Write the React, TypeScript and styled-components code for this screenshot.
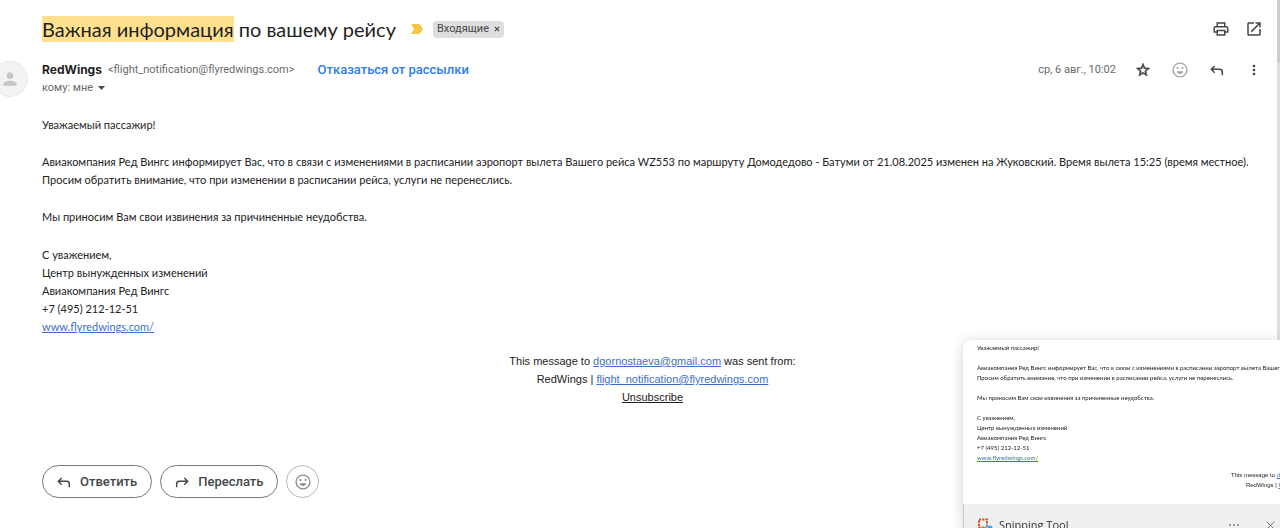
import React from "react";
import styled, { createGlobalStyle } from "styled-components";

const GlobalStyle = createGlobalStyle`
  *, *::before, *::after { box-sizing: border-box; }
  body { margin: 0; background: #fff; color: #222; font-family: Roboto, "Liberation Sans", sans-serif; }
  button { font: inherit; color: inherit; padding: 0; border: 0; background: none; cursor: pointer; }
  p, h1 { margin: 0; }
`;

const Page = styled.div`
  display: flex;
  min-height: 100vh;
  overflow: hidden;
`;

const Main = styled.main`
  flex: 1;
  min-width: 0;
  padding: 13px 7px 30px 0;
`;

const ScrollTrack = styled.div`
  width: 3px;
  background: #dfdfdf;
`;

const ScrollThumb = styled.div`
  height: 63px;
  background: #cdcdcd;
`;

const SubjectRow = styled.header`
  display: flex;
  align-items: center;
  height: 32px;
  padding-left: 42px;
`;

const Subject = styled.h1`
  font: 400 20px/26px Lato, "Open Sans", sans-serif;
  color: #1f1f1f;
  white-space: nowrap;
`;

const Highlight = styled.mark`
  padding: 1px 0;
  background: #fee08f;
  color: inherit;
`;

const Marker = styled.svg`
  width: 12px;
  height: 10px;
  margin: 0 10px 0 15px;
  fill: #f5c542;
`;

const Label = styled.span`
  display: flex;
  align-items: center;
  gap: 5px;
  height: 17px;
  padding: 0 4px;
  border-radius: 4px;
  background: #dddedd;
  color: #444746;
  font-size: 11px;
  line-height: 16px;
`;

const LabelClose = styled.button`
  display: flex;
`;

const Actions = styled.div<{ $gap: number }>`
  display: flex;
  align-items: center;
  gap: ${(p) => p.$gap}px;
  margin-left: auto;
`;

const IconButton = styled.button<{ $muted?: boolean }>`
  display: flex;
  align-items: center;
  justify-content: center;
  width: 32px;
  height: 18px;
  color: ${(p) => (p.$muted ? "#a3a5a4" : "#444746")};
`;

const SenderRow = styled.section`
  display: flex;
  align-items: flex-start;
  margin-top: 16px;
`;

const Avatar = styled.div`
  display: flex;
  align-items: center;
  justify-content: center;
  flex: none;
  width: 36px;
  height: 36px;
  margin: 0 14px 0 -8px;
  border: 1px solid #e9e9e9;
  border-radius: 50%;
  background: #f3f3f3;
  color: #c6c6c6;
`;

const SenderLine = styled.div`
  display: flex;
  align-items: center;
  height: 18px;
  font-size: 11px;
  line-height: 18px;
  color: #6a6a6a;
  white-space: nowrap;
`;

const SenderName = styled.span`
  margin-right: 6px;
  font: 700 12px/18px Inter, sans-serif;
  color: #1f1f1f;
`;

const UnsubscribeLink = styled.a`
  margin-left: 23px;
  font-size: 13px;
  font-weight: 500;
  color: #2b7de9;
  text-decoration: none;
`;

const RecipientButton = styled.button`
  display: flex;
  align-items: center;
  gap: 5px;
`;

const DateText = styled.time`
  margin-right: 6px;
  font-size: 11px;
  line-height: 18px;
  color: #6a6a6a;
`;

const Letter = styled.article`
  display: flex;
  flex-direction: column;
  gap: 19px;
  margin: 19px 7px 0 42px;
  font: 400 11px/18px Lato, "Open Sans", sans-serif;
  color: #222;

  p:last-child {
    padding-top: 1px;
  }
`;

const MailLink = styled.a<{ $dark?: boolean }>`
  color: ${(p) => (p.$dark ? "#222" : "#3b6fc9")};
`;

const Footer = styled.footer`
  margin: 16px 7px 0 42px;
  font: 400 11px/18px "Liberation Sans", Arial, sans-serif;
  text-align: center;
`;

const ReplyRow = styled.div`
  display: flex;
  gap: 8px;
  margin: 59px 0 0 42px;
`;

const PillButton = styled.button`
  display: flex;
  align-items: center;
  gap: 8px;
  height: 33px;
  padding: 0 14px 0 13px;
  border: 1px solid #747775;
  border-radius: 17px;
  font-size: 13px;
  font-weight: 500;
  color: #444746;
`;

const RoundButton = styled.button`
  display: flex;
  align-items: center;
  justify-content: center;
  width: 33px;
  height: 33px;
  border: 1px solid #b4b6b5;
  border-radius: 50%;
  color: #8a8c8b;
`;

const Toast = styled.aside`
  position: fixed;
  right: 0;
  bottom: 0;
  width: 317px;
  overflow: hidden;
  border-radius: 8px 0 0 0;
  background: #fff;
  box-shadow: 0 2px 14px rgba(0, 0, 0, 0.18);
`;

const Capture = styled.div`
  display: flex;
  flex-direction: column;
  gap: 10px;
  padding: 3px 0 14px 14px;
  font: 400 6px/10px Lato, "Open Sans", sans-serif;
  white-space: nowrap;
`;

const CaptureFooter = styled.div`
  width: max-content;
  margin: -3px 0 0 254px;
  font-family: "Liberation Sans", Arial, sans-serif;
  text-align: center;
`;

const ToastBar = styled.div`
  display: flex;
  align-items: flex-start;
  height: 24px;
  padding: 14px 0 0 14px;
  background: #efefef;
  border-left: 1px solid #c9c9c9;
  color: #333;
  font: 400 11px/14px "Open Sans", sans-serif;
`;

const ToastTitle = styled.span`
  margin: 0 auto 0 6px;
`;

const ToastButton = styled.button`
  display: flex;
  align-items: center;
  justify-content: center;
  width: 20px;
  height: 14px;
  margin-left: 16px;
  color: #777;
`;

const Icon = ({ d, size = 18, stroke = 0 }: { d: string; size?: number; stroke?: number }) => (
  <svg
    width={size}
    height={size}
    viewBox="0 0 24 24"
    fill="currentColor"
    stroke="currentColor"
    strokeWidth={stroke}
    aria-hidden="true"
  >
    <path d={d} />
  </svg>
);

const PRINT =
  "M19 8h-1V3H6v5H5c-1.66 0-3 1.34-3 3v6h4v4h12v-4h4v-6c0-1.66-1.34-3-3-3zM8 5h8v3H8V5zm8 14H8v-4h8v4zm2-4v-2H6v2H4v-4c0-.55.45-1 1-1h14c.55 0 1 .45 1 1v4h-2z";
const OPEN =
  "M19 19H5V5h7V3H5c-1.11 0-2 .9-2 2v14c0 1.1.89 2 2 2h14c1.1 0 2-.9 2-2v-7h-2v7zM14 3v2h3.59l-9.83 9.83 1.41 1.41L19 6.41V10h2V3h-7z";
const STAR =
  "M22 9.24l-7.19-.62L12 2 9.19 8.63 2 9.24l5.46 4.73L5.82 21 12 17.27 18.18 21l-1.63-7.03L22 9.24zM12 15.4l-3.76 2.27 1-4.28-3.32-2.88 4.38-.38L12 6.1l1.71 4.04 4.38.38-3.32 2.88 1 4.28L12 15.4z";
const DOTS =
  "M12 8c1.1 0 2-.9 2-2s-.9-2-2-2-2 .9-2 2 .9 2 2 2zm0 2c-1.1 0-2 .9-2 2s.9 2 2 2 2-.9 2-2-.9-2-2-2zm0 6c-1.1 0-2 .9-2 2s.9 2 2 2 2-.9 2-2-.9-2-2-2z";
const PERSON =
  "M12 12c2.21 0 4-1.79 4-4s-1.79-4-4-4-4 1.79-4 4 1.79 4 4 4zm0 2c-2.67 0-8 1.34-8 4v2h16v-2c0-2.66-5.33-4-8-4z";

const Smile = () => (
  <svg width="18" height="18" viewBox="0 0 24 24" fill="none" stroke="currentColor" strokeWidth="1.8" aria-hidden="true">
    <circle cx="12" cy="12" r="9.2" />
    <circle cx="8.6" cy="9.4" r="1.4" fill="currentColor" stroke="none" />
    <circle cx="15.4" cy="9.4" r="1.4" fill="currentColor" stroke="none" />
    <path d="M7.500 13.800h9c-.6 2.200-2.400 3.500-4.500 3.500s-3.900-1.300-4.500-3.500z" fill="currentColor" stroke="none" />
  </svg>
);

const Arrow = ({ forward }: { forward?: boolean }) => (
  <svg width="16" height="16" viewBox="0 0 24 24" fill="none" stroke="currentColor" strokeWidth="2.200" aria-hidden="true">
    <path
      d={
        forward
          ? "M15.500 6l5 5-5 5M20 11H8a4 4 0 0 0-4 4v5"
          : "M8.500 6l-5 5 5 5M4 11h12a4 4 0 0 1 4 4v5"
      }
    />
  </svg>
);

const SnipLogo = () => (
  <svg width="15" height="15" viewBox="0 0 15 15" fill="none" aria-hidden="true">
    <rect x="1" y="1.500" width="8" height="8" stroke="#d2552f" strokeWidth="2" strokeDasharray="2.200 1" />
    <path d="M9 9V5.500M9 9l-3 1" stroke="#8fa6b5" strokeWidth="1.500" />
    <circle cx="12" cy="10" r="2.500" fill="#3aa0e0" />
    <circle cx="8" cy="12" r="2" fill="#3aa0e0" />
  </svg>
);

const LetterText = () => (
  <>
    <p>Уважаемый пассажир!</p>
    <p>
      Авиакомпания Ред Вингс информирует Вас, что в связи с изменениями в расписании аэропорт вылета Вашего рейса WZ553 по
      маршруту Домодедово - Батуми от 21.08.2025 изменен на Жуковский. Время вылета 15:25 (время местное).
      <br />
      Просим обратить внимание, что при изменении в расписании рейса, услуги не перенеслись.
    </p>
    <p>Мы приносим Вам свои извинения за причиненные неудобства.</p>
    <p>
      С уважением,
      <br />
      Центр вынужденных изменений
      <br />
      Авиакомпания Ред Вингс
      <br />
      +7 (495) 212-12-51
      <br />
      <MailLink href="#site">www.flyredwings.com/</MailLink>
    </p>
  </>
);

const SentFrom = () => (
  <>
    <p>
      This message to <MailLink href="#to">dgornostaeva@gmail.com</MailLink> was sent from:
    </p>
    <p>
      RedWings | <MailLink href="#from">flight_notification@flyredwings.com</MailLink>
    </p>
  </>
);

export default function App() {
  return (
    <>
      <GlobalStyle />
      <Page>
        <Main>
          <SubjectRow>
            <Subject>
              <Highlight>Важная информация</Highlight> по вашему рейсу
            </Subject>
            <Marker viewBox="0 0 12 10" aria-hidden="true">
              <path d="M0 0h7.500q1 0 1.600.8L12 5l-2.900 4.200q-.6.8-1.600.8H0l3.200-5z" />
            </Marker>
            <Label>
              Входящие
              <LabelClose aria-label="Удалить ярлык">
                <svg width="6" height="6" viewBox="0 0 7 7" stroke="currentColor" strokeWidth="1.300">
                  <path d="M1 1l5 5M6 1L1 6" />
                </svg>
              </LabelClose>
            </Label>
            <Actions $gap={1}>
              <IconButton aria-label="Печать">
                <Icon d={PRINT} />
              </IconButton>
              <IconButton aria-label="В новом окне">
                <Icon d={OPEN} />
              </IconButton>
            </Actions>
          </SubjectRow>
          <SenderRow>
            <Avatar>
              <Icon d={PERSON} size={20} />
            </Avatar>
            <div>
              <SenderLine>
                <SenderName>RedWings</SenderName>
                <span>&lt;flight_notification@flyredwings.com&gt;</span>
                <UnsubscribeLink href="#unsubscribe">Отказаться от рассылки</UnsubscribeLink>
              </SenderLine>
              <SenderLine>
                <RecipientButton>
                  кому: мне
                  <svg width="7" height="4" viewBox="0 0 7 4" fill="#444746" aria-hidden="true">
                    <path d="M0 0h7L3.500 4z" />
                  </svg>
                </RecipientButton>
              </SenderLine>
            </div>
            <Actions $gap={5}>
              <DateText>ср, 6 авг., 10:02</DateText>
              <IconButton aria-label="Пометить">
                <Icon d={STAR} size={16} stroke={1} />
              </IconButton>
              <IconButton $muted aria-label="Реакция">
                <Smile />
              </IconButton>
              <IconButton aria-label="Ответить">
                <Arrow />
              </IconButton>
              <IconButton aria-label="Ещё">
                <Icon d={DOTS} size={16} />
              </IconButton>
            </Actions>
          </SenderRow>
          <Letter>
            <LetterText />
          </Letter>
          <Footer>
            <SentFrom />
            <p>
              <MailLink $dark href="#unsubscribe">
                Unsubscribe
              </MailLink>
            </p>
          </Footer>
          <ReplyRow>
            <PillButton>
              <Arrow />
              Ответить
            </PillButton>
            <PillButton>
              <Arrow forward />
              Переслать
            </PillButton>
            <RoundButton aria-label="Добавить реакцию">
              <Smile />
            </RoundButton>
          </ReplyRow>
        </Main>
        <ScrollTrack>
          <ScrollThumb />
        </ScrollTrack>
      </Page>
      <Toast>
        <Capture>
          <LetterText />
          <CaptureFooter>
            <SentFrom />
          </CaptureFooter>
        </Capture>
        <ToastBar>
          <SnipLogo />
          <ToastTitle>Snipping Tool</ToastTitle>
          <ToastButton aria-label="Параметры">
            <svg width="12" height="4" viewBox="0 0 12 4" fill="currentColor">
              <circle cx="2" cy="2" r="0.900" />
              <circle cx="6" cy="2" r="0.900" />
              <circle cx="10" cy="2" r="0.900" />
            </svg>
          </ToastButton>
          <ToastButton aria-label="Закрыть">
            <svg width="9" height="9" viewBox="0 0 9 9" stroke="currentColor">
              <path d="M0.500 0.500l8 8M8.500 0.500l-8 8" />
            </svg>
          </ToastButton>
        </ToastBar>
      </Toast>
    </>
  );
}
